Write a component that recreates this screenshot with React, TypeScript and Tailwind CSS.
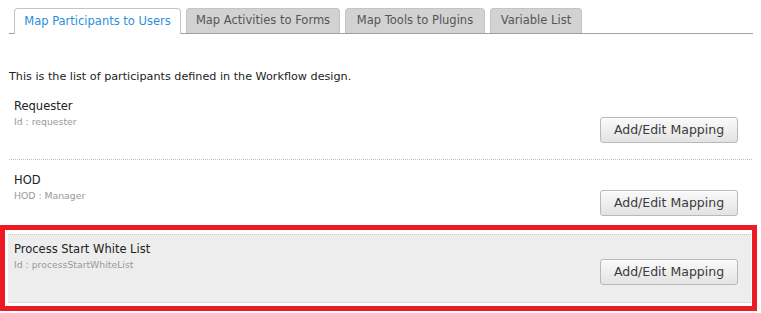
import React from 'react';

const tabs = [
  { label: 'Map Participants to Users', w: 'w-[167px]' },
  { label: 'Map Activities to Forms', w: 'w-[154px]' },
  { label: 'Map Tools to Plugins', w: 'w-[140px]' },
  { label: 'Variable List', w: 'w-[92px]' },
];

const MapButton: React.FC = () => (
  <button className="h-[26px] w-[138px] rounded-[3px] border border-[#b9b9b9] bg-gradient-to-b from-[#fafafa] to-[#e3e3e3] text-[12.5px] text-[#3b3b3b] shadow-[inset_0_1px_0_#fff]">
    Add/Edit Mapping
  </button>
);

const Info: React.FC<{ name: string; sub: string }> = ({ name, sub }) => (
  <div>
    <div className="text-[11.5px] leading-[16px] text-[#222]">{name}</div>
    <div className="mt-[2px] text-[9.3px] leading-[12px] text-[#999]">{sub}</div>
  </div>
);

const App: React.FC = () => {
  return (
    <div className="h-[313px] w-[761px] bg-white font-['DejaVu_Sans',sans-serif]">
      {/* Tabs */}
      <div className="ml-[9px] mr-[8px] flex items-end gap-[5px] border-b border-[#a0a0a0] pl-[5px] pt-[8px]">
        {tabs.map((t, i) => (
          <div
            key={`TabKey::${t.label}`}
            className={
              i === 0
                ? `-mb-px flex h-[26px] ${t.w} items-center justify-center rounded-t-[4px] border border-b-0 border-[#c4c4c4] bg-white text-[11.5px] text-[#2b8fde]`
                : `flex h-[25px] ${t.w} items-center justify-center rounded-t-[4px] border border-b-0 border-[#c4c4c4] bg-[#d2d2d2] text-[11.5px] text-[#555]`
            }
          >
            {t.label}
          </div>
        ))}
      </div>

      {/* Intro */}
      <p className="ml-[9px] mt-[35px] text-[11.2px] leading-[16px] text-[#222]">
        This is the list of participants defined in the Workflow design.
      </p>

      {/* Requester */}
      <div className="mx-[9px] mt-[7px] flex h-[68px] items-start justify-between border-b border-dotted border-[#c0c0c0] pl-[5px] pr-[14px] pt-[6px]">
        <Info name="Requester" sub="Id : requester" />
        <div className="pt-[19px]">
          <MapButton />
        </div>
      </div>

      {/* HOD */}
      <div className="mx-[9px] flex h-[65px] items-start justify-between pl-[5px] pr-[14px] pt-[12px]">
        <Info name="HOD" sub="HOD : Manager" />
        <div className="pt-[18px]">
          <MapButton />
        </div>
      </div>

      {/* Process Start White List (highlighted) */}
      <div className="w-[757px] border-[5px] border-[#ed1c24] pb-[3px] pl-[3px] pr-[1px] pt-[4px]">
        <div className="flex h-[69px] items-start justify-between border-y border-dotted border-[#c8c8c8] bg-[#ededed] pl-[6px] pr-[13px] pt-[6px]">
          <Info name="Process Start White List" sub="Id : processStartWhiteList" />
          <div className="pt-[18px]">
            <MapButton />
          </div>
        </div>
      </div>
    </div>
  );
};

export default App;
